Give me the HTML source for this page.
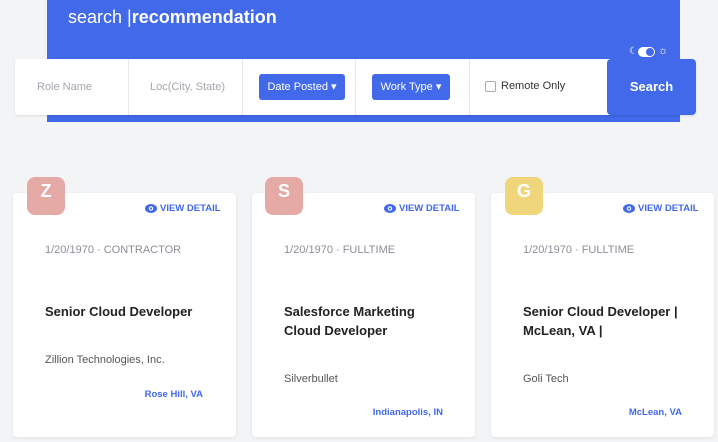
<!DOCTYPE html>
<html><head><style>
*{margin:0;padding:0;box-sizing:border-box}
body{width:718px;height:442px;overflow:hidden;background:#f3f4f6;font-family:"Liberation Sans",sans-serif;position:relative}
.a{position:absolute}
.hdr{left:47px;top:0;width:633px;height:122px;background:#4169e9}
.title{left:68px;top:7px;color:#fff;font-size:18px}
.bar{left:15px;top:59px;width:681px;height:56px;background:#fff;border-radius:3px;box-shadow:0 1px 2px rgba(0,0,0,.1)}
.div{top:59px;width:1px;height:56px;background:#e5e7eb}
.ph{top:81px;font-size:11px;color:#a3a7ae}
.btn{top:74px;height:26px;background:#4169e9;color:#fff;font-size:11px;border-radius:3px;line-height:26px;text-align:center}
.srch{left:607px;top:59px;width:89px;height:56px;background:#4169e9;border-radius:4px;color:#fff;font-weight:bold;font-size:13px;line-height:56px;text-align:center}
.card{top:193px;width:223px;height:244px;background:#fff;border-radius:4px;box-shadow:0 1px 3px rgba(0,0,0,.08)}
.av{top:177px;width:38px;height:38px;border-radius:8px;color:#fff;font-size:18px;font-weight:bold;text-align:center;line-height:28px}
.vd{font-size:9.5px;font-weight:bold;color:#4169e9;top:203px}
.vd svg{vertical-align:-2px;margin-right:3px}
.meta{top:244px;font-size:11px;color:#8a8f98}
.jt{top:302px;font-size:13px;font-weight:bold;color:#222;line-height:19px;width:165px}
.co{font-size:11px;color:#555}
.loc{top:389px;font-size:9.5px;font-weight:bold;color:#4169e9;text-align:right}
</style></head><body>
<div class="a hdr"></div>
<div class="a title">search |<b>recommendation</b></div>
<div class="a" style="left:629px;top:46px;color:#fff;font-size:10px">&#9790;</div>
<div class="a" style="left:638px;top:47px;width:17px;height:10px;border-radius:5px;background:#fff"><div style="position:absolute;right:1px;top:1px;width:8px;height:8px;border-radius:50%;background:#4169e9"></div></div>
<div class="a" style="left:658px;top:45px;color:#fff;font-size:11px">&#9788;</div>
<div class="a bar"></div>
<div class="a div" style="left:128px"></div>
<div class="a div" style="left:242px"></div>
<div class="a div" style="left:355px"></div>
<div class="a div" style="left:469px"></div>
<div class="a ph" style="left:37px">Role Name</div>
<div class="a ph" style="left:150px">Loc(City, State)</div>
<div class="a btn" style="left:259px;width:86px">Date Posted &#9662;</div>
<div class="a btn" style="left:372px;width:78px">Work Type &#9662;</div>
<div class="a" style="left:485px;top:81px;width:11px;height:11px;border:1px solid #aaa;border-radius:2px"></div>
<div class="a" style="left:501px;top:80px;font-size:11px;color:#333">Remote Only</div>
<div class="a srch">Search</div>

<div class="a card" style="left:13px"></div>
<div class="a card" style="left:252px"></div>
<div class="a card" style="left:491px"></div>
<div class="a av" style="left:27px;background:#e5a9a6">Z</div>
<div class="a av" style="left:265px;background:#e5a9a6">S</div>
<div class="a av" style="left:505px;background:#efd67a">G</div>

<div class="a vd" style="left:145px"><svg width="12" height="9" viewBox="0 0 12 9"><ellipse cx="6" cy="4.5" rx="6" ry="4.5" fill="#4169e9"/><circle cx="6" cy="4.5" r="2.2" fill="#fff"/><circle cx="6" cy="4.5" r="1.1" fill="#4169e9"/></svg>VIEW DETAIL</div>
<div class="a vd" style="left:384px"><svg width="12" height="9" viewBox="0 0 12 9"><ellipse cx="6" cy="4.5" rx="6" ry="4.5" fill="#4169e9"/><circle cx="6" cy="4.5" r="2.2" fill="#fff"/><circle cx="6" cy="4.5" r="1.1" fill="#4169e9"/></svg>VIEW DETAIL</div>
<div class="a vd" style="left:623px"><svg width="12" height="9" viewBox="0 0 12 9"><ellipse cx="6" cy="4.5" rx="6" ry="4.5" fill="#4169e9"/><circle cx="6" cy="4.5" r="2.2" fill="#fff"/><circle cx="6" cy="4.5" r="1.1" fill="#4169e9"/></svg>VIEW DETAIL</div>

<div class="a meta" style="left:45px">1/20/1970 · CONTRACTOR</div>
<div class="a meta" style="left:284px">1/20/1970 · FULLTIME</div>
<div class="a meta" style="left:523px">1/20/1970 · FULLTIME</div>

<div class="a jt" style="left:45px">Senior Cloud Developer</div>
<div class="a jt" style="left:284px">Salesforce Marketing Cloud Developer</div>
<div class="a jt" style="left:523px">Senior Cloud Developer | McLean, VA |</div>

<div class="a co" style="left:45px;top:354px">Zillion Technologies, Inc.</div>
<div class="a co" style="left:284px;top:373px">Silverbullet</div>
<div class="a co" style="left:523px;top:373px">Goli Tech</div>

<div class="a loc" style="left:100px;width:103px;top:389px">Rose Hill, VA</div>
<div class="a loc" style="left:340px;width:103px;top:407px">Indianapolis, IN</div>
<div class="a loc" style="left:579px;width:103px;top:407px">McLean, VA</div>
</body></html>
